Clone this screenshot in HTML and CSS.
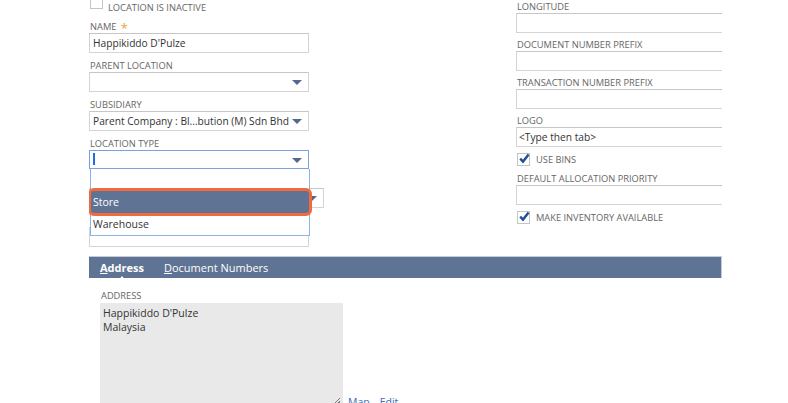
FILE: index.html
```html
<!DOCTYPE html>
<html lang="en">
<head>
    <meta charset="UTF-8">
    <meta name="viewport" content="width=device-width, initial-scale=1.0">
    <title>Location</title>
    <link rel="stylesheet" href="styles.css">
</head>
<body>
    <div class="page">
        <div class="form">
            <div class="col col-left">
                <div class="check-row first-row">
                    <span class="box"></span>
                    <span class="check-text">LOCATION IS INACTIVE</span>
                </div>

                <div class="field">
                    <div class="lbl">NAME <span class="req">*</span></div>
                    <div class="input">Happikiddo D'Pulze</div>
                </div>

                <div class="field">
                    <div class="lbl">PARENT LOCATION</div>
                    <div class="input select"><span class="arrow"></span></div>
                </div>

                <div class="field">
                    <div class="lbl">SUBSIDIARY</div>
                    <div class="input select">Parent Company : Bl...bution (M) Sdn Bhd<span class="arrow"></span></div>
                </div>

                <div class="field type-field">
                    <div class="lbl">LOCATION TYPE</div>
                    <div class="input select focused"><span class="caret"></span><span class="arrow"></span></div>
                    <ul class="dropdown">
                        <li class="option"></li>
                        <li class="option selected">Store</li>
                        <li class="option">Warehouse</li>
                    </ul>
                </div>

                <div class="field">
                    <div class="lbl"></div>
                    <div class="input select wide"><span class="arrow"></span></div>
                </div>

                <div class="field">
                    <div class="lbl"></div>
                    <div class="input"></div>
                </div>
            </div>

            <div class="col col-right">
                <div class="field">
                    <div class="lbl">LONGITUDE</div>
                    <div class="input long"></div>
                </div>

                <div class="field">
                    <div class="lbl">DOCUMENT NUMBER PREFIX</div>
                    <div class="input long"></div>
                </div>

                <div class="field">
                    <div class="lbl">TRANSACTION NUMBER PREFIX</div>
                    <div class="input long"></div>
                </div>

                <div class="field">
                    <div class="lbl">LOGO</div>
                    <div class="input long">&lt;Type then tab&gt;</div>
                </div>

                <div class="check-row">
                    <span class="box checked">
                        <svg viewBox="0 0 12 12" width="12" height="12"><path d="M2.2 5.6 L5 8.6 L10.6 1.6" fill="none" stroke="#1f4f97" stroke-width="2.4"/></svg>
                    </span>
                    <span class="check-text">USE BINS</span>
                </div>

                <div class="field">
                    <div class="lbl">DEFAULT ALLOCATION PRIORITY</div>
                    <div class="input long"></div>
                </div>

                <div class="check-row">
                    <span class="box checked">
                        <svg viewBox="0 0 12 12" width="12" height="12"><path d="M2.2 5.6 L5 8.6 L10.6 1.6" fill="none" stroke="#1f4f97" stroke-width="2.4"/></svg>
                    </span>
                    <span class="check-text">MAKE INVENTORY AVAILABLE</span>
                </div>
            </div>
        </div>

        <div class="tabs">
            <span class="tab active"><u>A</u>ddress</span>
            <span class="tab"><u>D</u>ocument Numbers</span>
        </div>

        <div class="address">
            <div class="lbl">ADDRESS</div>
            <div class="addr-row">
                <div class="addr-box">
                    Happikiddo D'Pulze<br>
                    Malaysia
                    <span class="grip"></span>
                </div>
                <a href="#" class="addr-link">Map</a>
                <a href="#" class="addr-link">Edit</a>
            </div>
        </div>
    </div>
</body>
</html>
```

FILE: styles.css
```css
html, body {
    margin: 0;
    padding: 0;
    background-color: #fff;
    overflow: hidden;
}

body {
    font-family: "Open Sans", Arial, sans-serif;
    color: #333;
    width: 788px;
    height: 403px;
}

.page {
    margin-left: 89px;
    width: 633px;
}

.form {
    display: grid;
    grid-template-columns: 427px 1fr;
    overflow: hidden;
    margin-top: -3px;
    height: 259px;
}

.col-left {
    display: flex;
    flex-direction: column;
}

.col-right {
    display: flex;
    flex-direction: column;
}

.field {
    position: relative;
    margin-bottom: 3px;
}

.col-right .field {
    margin-bottom: 2px;
}

.lbl {
    font-size: 9.3px;
    height: 16px;
    box-sizing: border-box;
    padding-top: 3px;
    line-height: 13px;
    color: #666;
    padding-left: 1px;
    white-space: nowrap;
}

.req {
    color: #eea23b;
    font-size: 13px;
    margin-left: 2px;
    line-height: 0;
    vertical-align: -3px;
}

.input {
    position: relative;
    box-sizing: border-box;
    width: 220px;
    height: 20px;
    border: 1px solid #d4d4d4;
    border-top-color: #c6c6c6;
    background-color: #fff;
    font-size: 10.2px;
    line-height: 18px;
    padding-left: 3px;
    color: #333;
    white-space: nowrap;
    overflow: hidden;
}

.input.long {
    width: 260px;
    padding-left: 2px;
}

.input.wide {
    width: 235px;
}

.arrow {
    position: absolute;
    right: 6px;
    top: 7px;
    width: 0;
    height: 0;
    border-left: 5px solid transparent;
    border-right: 5px solid transparent;
    border-top: 5px solid #53698b;
}

.input.focused {
    height: 19px;
    border-color: #7aa3de;
}

.caret {
    position: absolute;
    left: 3px;
    top: 2px;
    width: 2px;
    height: 12px;
    background-color: #1f6fe0;
}

/* dropdown list over the fields below */
.dropdown {
    position: absolute;
    left: 1px;
    top: 35px;
    z-index: 5;
    width: 220px;
    margin: 0;
    padding: 0;
    list-style: none;
    background-color: #fff;
    border: 1px solid #8db2e8;
    border-top: none;
    box-sizing: border-box;
}

.option {
    height: 22px;
    line-height: 22px;
    font-size: 10.5px;
    padding-left: 2px;
    color: #333;
}

.option.selected {
    background-color: #5f7494;
    color: #fff;
    border-radius: 3px;
    box-shadow: 0 0 0 3px #f26a3b;
    position: relative;
    z-index: 2;
}

.check-row {
    display: flex;
    align-items: center;
    height: 20px;
    padding-left: 1px;
}

.first-row .box {
    margin-top: -9px;
}

.box {
    box-sizing: border-box;
    width: 13px;
    height: 13px;
    border: 1px solid #c4c4c4;
    background-color: #fff;
    position: relative;
}

.box svg {
    position: absolute;
    left: 0;
    top: -1px;
    overflow: visible;
}

.check-text {
    font-size: 9.3px;
    color: #666;
    margin-left: 5px;
    white-space: nowrap;
}

.col-right .check-row .check-text {
    margin-left: 6px;
}

/* tab bar */
.tabs {
    position: relative;
    display: flex;
    align-items: center;
    height: 22px;
    box-sizing: border-box;
    background-color: #5f7494;
    border-top: 1px solid #c4ccd9;
    border-right: 1px solid #c4ccd9;
    padding-left: 11px;
}

.tab {
    color: #fff;
    font-size: 11px;
    margin-right: 20px;
}

.tab.active {
    font-weight: bold;
    position: relative;
}

.tab.active::after {
    content: "";
    position: absolute;
    left: 50%;
    margin-left: -4px;
    bottom: -6px;
    width: 0;
    height: 0;
    border-left: 4px solid transparent;
    border-right: 4px solid transparent;
    border-bottom: 5px solid #fff;
}

.address {
    padding-left: 11px;
    padding-top: 12px;
}

.address .lbl {
    height: 12px;
    padding-top: 0;
    line-height: 12px;
}

.addr-row {
    display: flex;
    align-items: flex-end;
    margin-top: 1px;
}

.addr-box {
    position: relative;
    box-sizing: border-box;
    width: 243px;
    height: 106px;
    background-color: #e9e9e9;
    font-size: 10.5px;
    line-height: 14px;
    padding: 3px 3px;
    color: #333;
}

.grip {
    position: absolute;
    right: 3px;
    bottom: 5px;
    width: 6px;
    height: 6px;
    background: linear-gradient(135deg, transparent 45%, #777 45%, #777 58%, transparent 58%, transparent 75%, #777 75%);
}

.addr-link {
    font-size: 10.5px;
    color: #3d6bb5;
    text-decoration: none;
    margin-left: 5px;
    line-height: 14px;
    margin-bottom: 0;
}

.addr-link + .addr-link {
    margin-left: 10px;
}
```
